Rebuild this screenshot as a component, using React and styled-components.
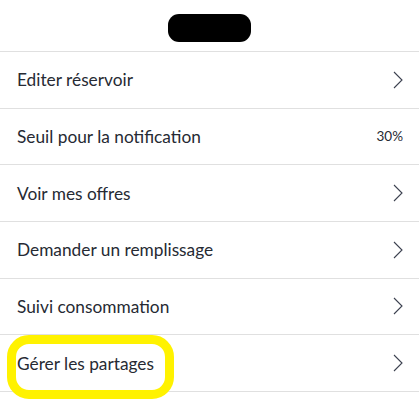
import styled, { createGlobalStyle } from "styled-components";

const GlobalStyle = createGlobalStyle`
    body {
        margin: 0;
        background: #ffffff;
        font-family: "Source Sans Pro", Lato, "Open Sans", sans-serif;
    }
`;

const Screen = styled.div`
    width: 419px;
    height: 404px;
    overflow: hidden;
    background: #ffffff;
`;

const TopBar = styled.div`
    height: 52px;
    display: flex;
    justify-content: center;
    padding-top: 14px;
    box-sizing: border-box;
    border-bottom: 1px solid #e0e0e0;
`;

const Pill = styled.div`
    width: 83px;
    height: 28px;
    border-radius: 11px;
    background: #000000;
`;

const Menu = styled.ul`
    list-style: none;
    margin: 0;
    padding: 0;
`;

const Row = styled.li`
    position: relative;
    height: 55.67px;
    display: flex;
    align-items: center;
    justify-content: space-between;
    padding: 0 16px 0 17px;
    border-bottom: 1px solid #e0e0e0;
`;

const Label = styled.span`
    font-size: 17.3px;
    color: #262a33;
`;

const Value = styled.span`
    font-size: 13.5px;
    color: #262a33;
`;

const Highlight = styled.div`
    position: absolute;
    left: 7px;
    top: 0;
    width: 167px;
    height: 64px;
    box-sizing: border-box;
    border: 9px solid #fff200;
    border-radius: 22px;
    pointer-events: none;
`;

const Chevron = () => (
    <svg width="10" height="18" viewBox="0 0 10 18" fill="none">
        <path d="M1 1 L9 9 L1 17" stroke="#3c4150" strokeWidth="1.1" />
    </svg>
);

const items = [
    { label: "Editer réservoir" },
    { label: "Seuil pour la notification", value: "30%" },
    { label: "Voir mes offres" },
    { label: "Demander un remplissage" },
    { label: "Suivi consommation" },
    { label: "Gérer les partages", highlighted: true },
];

export default function App() {
    return (
        <Screen>
            <GlobalStyle />
            <TopBar>
                <Pill />
            </TopBar>
            <Menu>
                {items.map((item) => (
                    <Row key={item.label}>
                        {item.highlighted && <Highlight />}
                        <Label>{item.label}</Label>
                        {item.value ? <Value>{item.value}</Value> : <Chevron />}
                    </Row>
                ))}
            </Menu>
        </Screen>
    );
}
